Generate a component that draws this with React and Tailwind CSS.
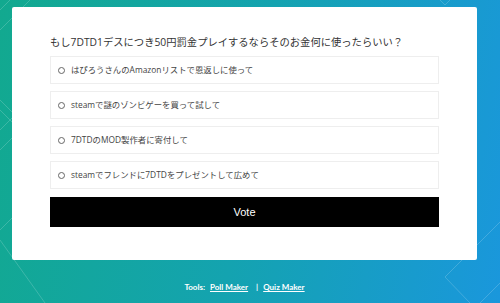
import React from "react";

const options = [
  "はぴろうさんのAmazonリストで恩返しに使って",
  "steamで謎のゾンビゲーを買って試して",
  "7DTDのMOD製作者に寄付して",
  "steamでフレンドに7DTDをプレゼントして広めて",
];

const Lines = () => (
  <svg className="absolute inset-0 w-full h-full" viewBox="0 0 500 303" preserveAspectRatio="none" fill="none">
    <g stroke="#ffffff" strokeOpacity="0.18" strokeWidth="1">
      <path d="M0 10 L40 -30 M-10 40 L60 -30 M0 130 L15 115 L0 100 M0 150 L20 130 L0 110" />
      <path d="M0 230 L30 200 M0 240 L45 303" />
      <path d="M260 0 L275 -15 M430 -10 L445 5 L460 -10" />
      <path d="M445 277 L475 247 L500 222 M445 277 L470 303 M480 303 L500 283" />
    </g>
  </svg>
);

const App = () => {
  return (
    <div className="relative w-full h-[303px] overflow-hidden bg-[linear-gradient(100deg,#12a98f_0%,#14a3b0_50%,#1a97dc_100%)] font-['Segoe_UI','Open_Sans','Noto_Sans_CJK_JP',sans-serif]">
      <Lines />
      <div className="relative pt-[7px] pl-[12px] pr-[23px]">
        <div className="bg-white rounded-[2px] px-[38px] pt-[25px] pb-[33px]">
          <p className="text-[10.3px] leading-[20px] text-[#333333] mb-[4px]">
            もし7DTD1デスにつき50円罰金プレイするならそのお金何に使ったらいい？
          </p>
          <div className="flex flex-col gap-[7px]">
            {options.map((opt, i) => (
              <div key={i} className="h-[28px] border border-[#eeeeee] flex items-center gap-[6px] px-[7px]">
                <span className="w-[7px] h-[7px] rounded-full border border-[#666666]" />
                <span className="text-[8.4px] text-[#444444]">{opt}</span>
              </div>
            ))}
          </div>
          <button className="mt-[8px] w-full h-[30px] bg-black text-white text-[11px] font-['Liberation_Sans',Arial,sans-serif]">
            Vote
          </button>
        </div>
        <div className="mt-[20px] flex justify-center items-center leading-[14px] text-[8px] font-bold text-white font-['Lato',sans-serif]">
          <span>Tools:</span>
          <a className="underline ml-[5px]">Poll Maker</a>
          <span className="ml-[8px] mr-[5px]">|</span>
          <a className="underline">Quiz Maker</a>
        </div>
      </div>
    </div>
  );
};

export default App;
